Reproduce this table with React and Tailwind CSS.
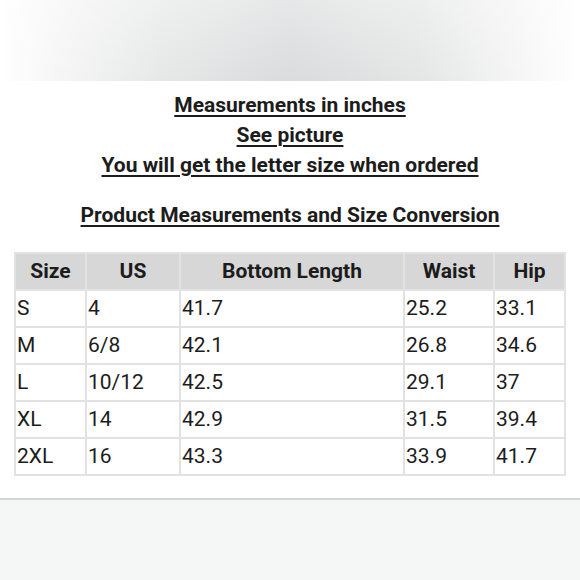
import React from "react";

const rows = [
  ["S", "4", "41.7", "25.2", "33.1"],
  ["M", "6/8", "42.1", "26.8", "34.6"],
  ["L", "10/12", "42.5", "29.1", "37"],
  ["XL", "14", "42.9", "31.5", "39.4"],
  ["2XL", "16", "43.3", "33.9", "41.7"],
];

const headers = [
  { label: "Size", w: "w-[71px]" },
  { label: "US", w: "w-[94px]" },
  { label: "Bottom Length", w: "w-[224px]" },
  { label: "Waist", w: "w-[90px]" },
  { label: "Hip", w: "w-[71px]" },
];

export default function App() {
  return (
    <div className="w-[580px] h-[580px] bg-white flex flex-col font-['Roboto',sans-serif] text-[#1c1c1c] overflow-hidden">
      {/* top photo strip */}
      <div className="h-[81px] bg-[linear-gradient(to_right,#ffffff_0%,#f6f6f6_10%,#e6e7e7_28%,#dadbdc_50%,#e4e5e5_72%,#f6f6f6_90%,#ffffff_100%)] relative">
        <div className="absolute inset-0 bg-[linear-gradient(to_bottom,rgba(255,255,255,0.35),rgba(255,255,255,0))]" />
      </div>

      <div className="pt-[9px] flex flex-col items-center text-[21px] font-bold leading-[30px]">
        <p className="underline underline-offset-[3px] decoration-[1.5px]">Measurements in inches</p>
        <p className="underline underline-offset-[3px] decoration-[1.5px]">See picture</p>
        <p className="underline underline-offset-[3px] decoration-[1.5px]">You will get the letter size when ordered</p>
        <p className="mt-[20px] underline underline-offset-[3px] decoration-[1.5px]">Product Measurements and Size Conversion</p>
      </div>

      <div className="mt-[22px] px-[14px]">
        <table className="w-[551px] border-collapse border-2 border-[#e2e2e2] text-[21px] table-fixed">
          <thead>
            <tr className="bg-[#d7d7d7] h-[37px]">
              {headers.map((h) => (
                <th key={h.label} className={`${h.w} border-2 border-[#e2e2e2] font-bold text-center leading-none`}>
                  {h.label}
                </th>
              ))}
            </tr>
          </thead>
          <tbody>
            {rows.map((r) => (
              <tr key={r[0]} className="h-[37px]">
                {r.map((c, i) => (
                  <td key={i} className="border-2 border-[#e2e2e2] pl-[1px] text-left font-normal leading-none">
                    {c}
                  </td>
                ))}
              </tr>
            ))}
          </tbody>
        </table>
      </div>

      <div className="mt-[22px] h-[2px] bg-[#d4d4d4]" />
      <div className="flex-1 bg-[#f5f6f6]" />
    </div>
  );
}
